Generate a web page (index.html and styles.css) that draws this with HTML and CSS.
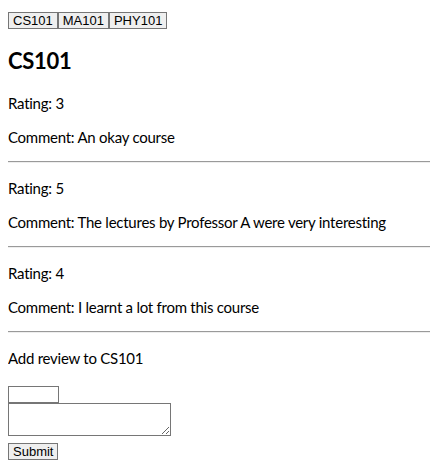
FILE: index.html
```html
<!DOCTYPE html>
<html lang="en">
<head>
<meta charset="utf-8">
<title>Course reviews</title>
<link rel="stylesheet" href="styles.css">
</head>
<body>
<div class="tabs"><button class="btn">CS101</button><button class="btn">MA101</button><button class="btn">PHY101</button></div>
<h2 class="course-title">CS101</h2>
<div class="reviews">
  <div class="review">
    <p class="rating">Rating: 3</p>
    <p class="comment">Comment: An okay course</p>
    <hr class="divider">
  </div>
  <div class="review">
    <p class="rating">Rating: 5</p>
    <p class="comment">Comment: The lectures by Professor A were very interesting</p>
    <hr class="divider">
  </div>
  <div class="review">
    <p class="rating">Rating: 4</p>
    <p class="comment">Comment: I learnt a lot from this course</p>
    <hr class="divider">
  </div>
</div>
<p class="add-title">Add review to CS101</p>
<form class="review-form" onsubmit="return false">
  <input class="rating-input" type="text">
  <textarea class="comment-input"></textarea>
  <button class="btn submit" type="submit">Submit</button>
</form>
</body>
</html>
```

FILE: styles.css
```css
html, body {
  background: #ffffff;
}
body {
  margin: 8px 0 8px 8px;
  font-family: Lato, "Open Sans", sans-serif;
  font-size: 15px;
  letter-spacing: -0.25px;
  line-height: 18px;
  color: #000000;
}
.tabs {
  display: flex;
  padding-top: 4px;
}
.btn {
  font-family: "Liberation Sans", Arial, sans-serif;
  font-size: 13px;
  letter-spacing: 0;
  line-height: 13px;
  height: 17px;
  padding: 1px 4px;
  margin: 0;
  border: 1px solid #767676;
  border-radius: 0;
  background: #efefef;
  color: #000000;
}
.course-title {
  font-size: 22px;
  letter-spacing: -0.3px;
  font-weight: 700;
  line-height: 28px;
  margin: 18px 0 19px;
}
.review p {
  margin: 0;
}
.review .rating {
  margin-bottom: 16px;
}
.divider {
  margin: 15px 0 16px;
  height: 0;
  border: 0;
  border-top: 1px solid #9a9a9a;
  border-bottom: 1px solid #eeeeee;
}
.add-title {
  margin: 0;
}
.review-form {
  display: flex;
  flex-direction: column;
  align-items: flex-start;
  margin-top: 19px;
}
.rating-input {
  box-sizing: border-box;
  width: 51px;
  height: 17px;
  margin: 0;
  padding: 1px 2px;
  border: 1px solid #767676;
  border-radius: 0;
  font-size: 13px;
}
.comment-input {
  box-sizing: border-box;
  width: 163px;
  height: 33px;
  margin: 0;
  padding: 2px;
  border: 1px solid #767676;
  border-radius: 0;
  font-size: 13px;
}
.submit {
  margin-top: 7px;
}
```
